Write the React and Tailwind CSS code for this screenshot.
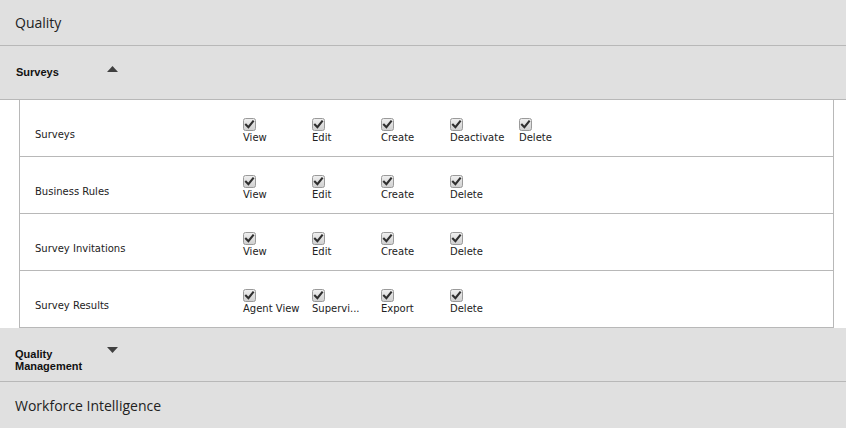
import React from "react";

const rows = [
  { label: "Surveys", perms: ["View", "Edit", "Create", "Deactivate", "Delete"] },
  { label: "Business Rules", perms: ["View", "Edit", "Create", "Delete"] },
  { label: "Survey Invitations", perms: ["View", "Edit", "Create", "Delete"] },
  { label: "Survey Results", perms: ["Agent View", "Supervi...", "Export", "Delete"] },
];

function Check() {
  return (
    <svg width="13" height="13" viewBox="0 0 13 13" className="block">
      <defs>
        <linearGradient id="cbg" x1="0" y1="0" x2="0" y2="1">
          <stop offset="0" stopColor="#f0f0f0" />
          <stop offset="1" stopColor="#cfcfcf" />
        </linearGradient>
      </defs>
      <rect x="0.5" y="0.5" width="12" height="12" rx="2" fill="url(#cbg)" stroke="#9a9a9a" />
      <path d="M3 6.8 L5.4 9.2 L10 3.4" fill="none" stroke="#2f2f2f" strokeWidth="2.1" strokeLinecap="square" />
    </svg>
  );
}

function Tri({ up }) {
  return (
    <svg width="11" height="6" viewBox="0 0 11 6" className="block">
      {up ? <path d="M0 6 L5.5 0 L11 6 Z" fill="#404040" /> : <path d="M0 0 L11 0 L5.5 6 Z" fill="#404040" />}
    </svg>
  );
}

export default function App() {
  return (
    <div className="w-[846px] h-[428px] overflow-hidden bg-white text-[#222]">
      <div className="h-[46px] bg-[#e0e0e0] border-b border-[#b8b8b8] flex items-center pl-[15px]">
        <span className="text-[14px] leading-[19px] text-[#222]" style={{ fontFamily: '"Open Sans", sans-serif' }}>
          Quality
        </span>
      </div>
      <div className="h-[54px] bg-[#e0e0e0] border-b border-[#b8b8b8] flex items-start pl-[16px] pt-[20px]">
        <span
          className="w-[91px] text-[11px] leading-[12px] font-bold text-[#111]"
          style={{ fontFamily: '"Liberation Sans", Arial, sans-serif' }}
        >
          Surveys
        </span>
        <div className="mt-[0px]">
          <Tri up />
        </div>
      </div>
      <div
        className="ml-[19px] w-[815px] border-l border-r border-[#b8b8b8] bg-white"
        style={{ fontFamily: '"DejaVu Sans", Verdana, sans-serif' }}
      >
        {rows.map((r) => (
          <div key={r.label} className="h-[57px] border-b border-[#b8b8b8] flex items-start">
            <div className="w-[223px] pl-[15px] pt-[29px] text-[10px] leading-[12px] text-[#222]">{r.label}</div>
            {r.perms.map((p) => (
              <div key={p} className="w-[69px] pt-[18px]">
                <Check />
                <div className="mt-[1px] text-[10px] leading-[12px] text-[#222] whitespace-nowrap">{p}</div>
              </div>
            ))}
          </div>
        ))}
      </div>
      <div className="h-[54px] bg-[#e0e0e0] border-b border-[#b8b8b8] flex items-start pl-[15px] pt-[20px]">
        <span
          className="w-[92px] text-[11px] leading-[12px] font-bold text-[#111]"
          style={{ fontFamily: '"Liberation Sans", Arial, sans-serif' }}
        >
          Quality Management
        </span>
        <div className="-mt-[1px]">
          <Tri />
        </div>
      </div>
      <div className="h-[46px] bg-[#e0e0e0] flex items-center pl-[15px]">
        <span className="text-[14px] leading-[19px] text-[#222]" style={{ fontFamily: '"Open Sans", sans-serif' }}>
          Workforce Intelligence
        </span>
      </div>
    </div>
  );
}
